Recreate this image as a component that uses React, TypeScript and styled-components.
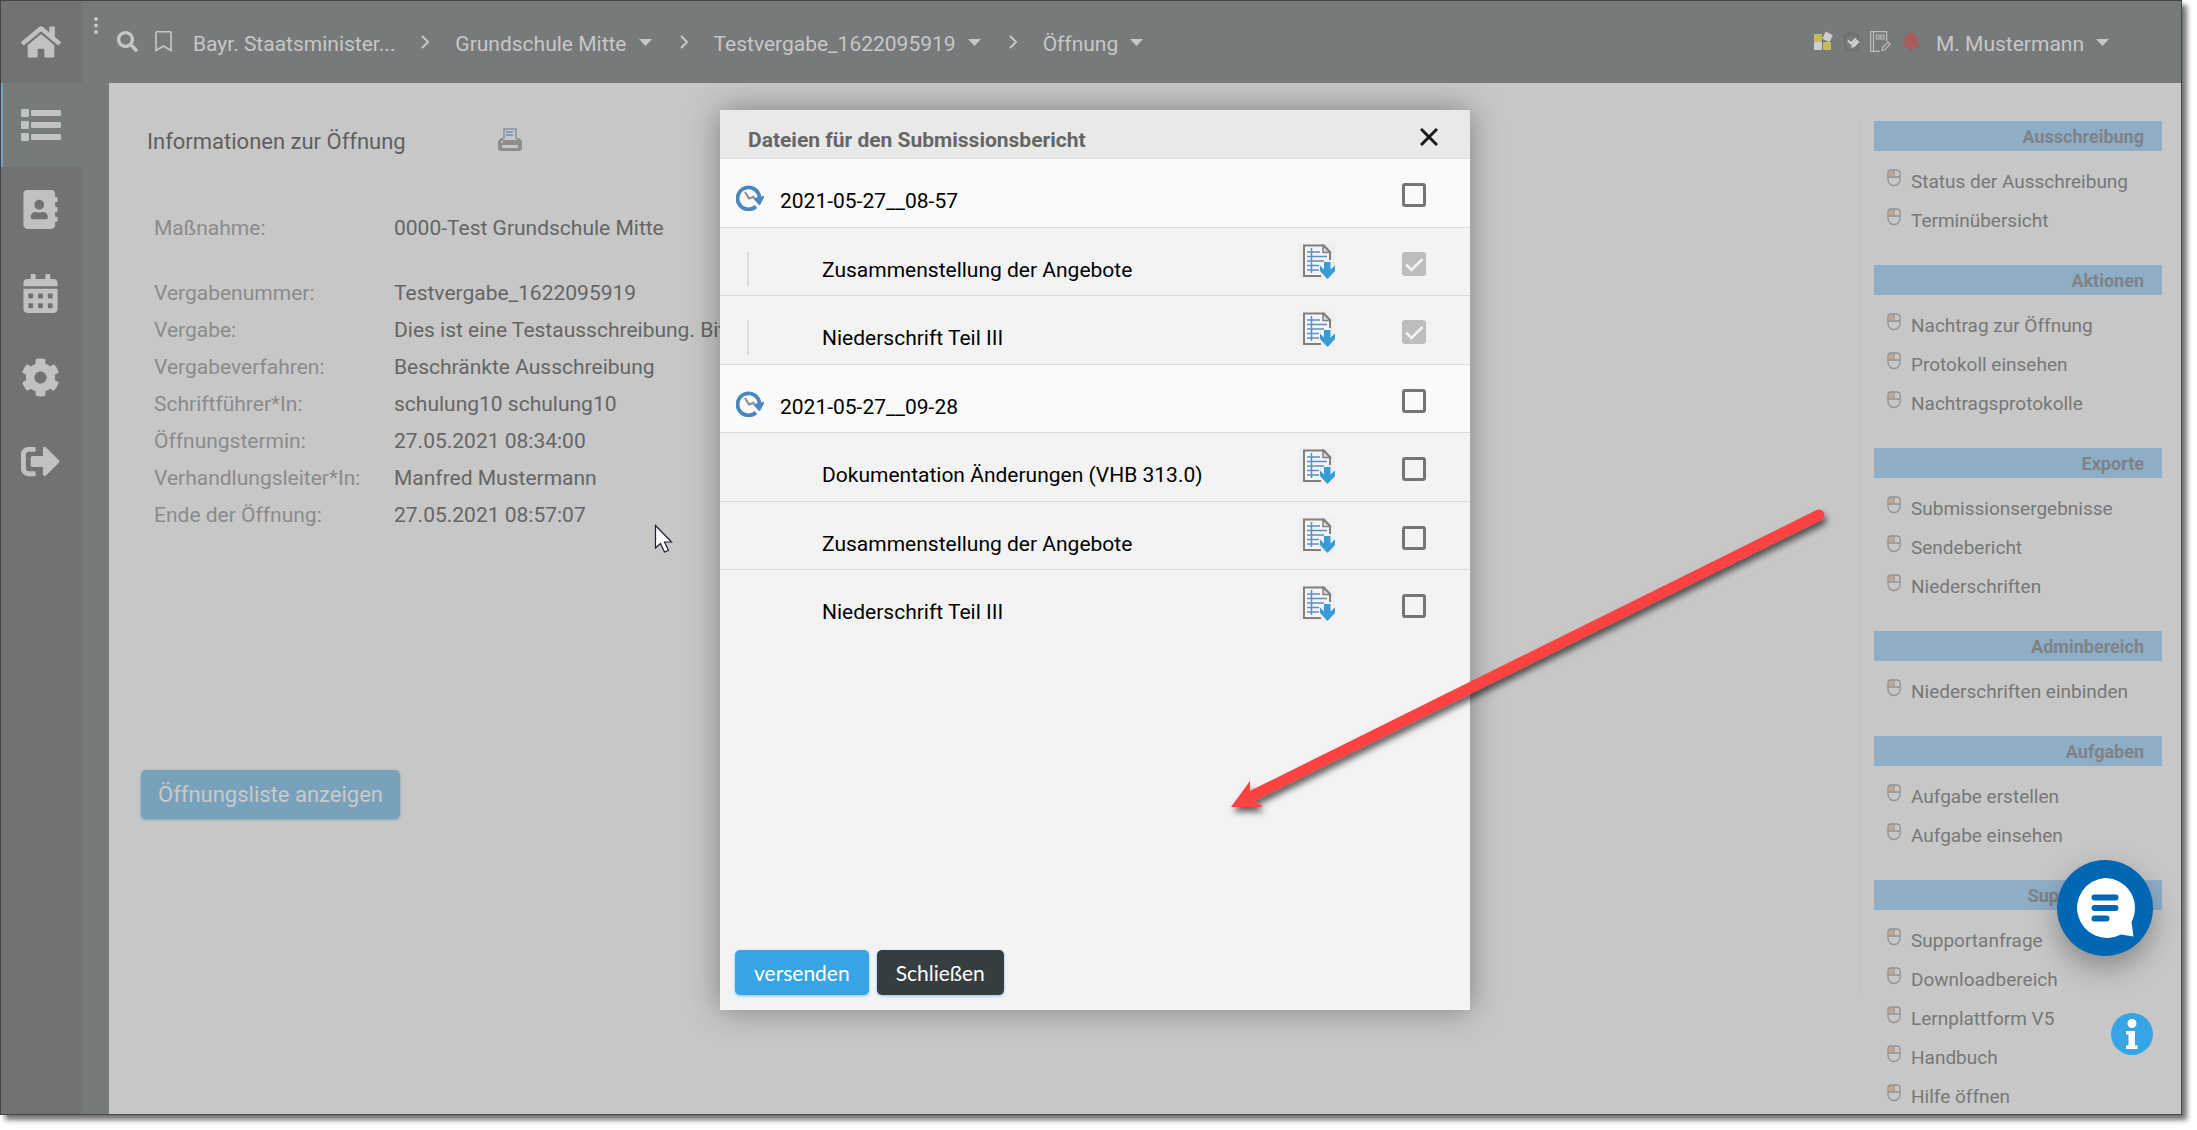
import React from "react";
import styled, { createGlobalStyle } from "styled-components";
import { FaAddressBook, FaBell, FaCalendarAlt, FaCog, FaHome, FaSearch, FaSignOutAlt } from "react-icons/fa";

const GlobalStyle = createGlobalStyle`
  *, *::before, *::after { box-sizing: border-box; }
  html, body { margin: 0; padding: 0; background: #fff; }
  body { font-family: Roboto, "Liberation Sans", sans-serif; font-size: 21px; line-height: 26px; }
  button { font: inherit; color: inherit; background: none; border: 0; padding: 0; margin: 0; cursor: pointer; }
  a { color: inherit; text-decoration: none; }
  h1, h2, h3, ul, dl, dd, dt, p { margin: 0; padding: 0; font-size: inherit; font-weight: inherit; }
  ul { list-style: none; }
  svg { display: block; flex: none; }
`;

const Page = styled.div`
  display: flex;
  height: 100vh;
  padding: 0 15px 15px 0;
  overflow: hidden;
`;

const Frame = styled.div`
  position: relative;
  flex: 1;
  min-width: 0;
  display: flex;
  border: 1px solid #444345;
  background: #767a7b;
  box-shadow: 5px 5px 5px rgba(0, 0, 0, 0.55);
`;

const Rail = styled.nav`
  flex: none;
  width: 81px;
  background: #717274;
  color: #c1c1c1;
`;

const RailLink = styled.a<{ $active?: boolean; $first?: boolean }>`
  display: flex;
  align-items: center;
  justify-content: center;
  height: ${(p) => (p.$first ? 82 : 84)}px;
  padding-right: 2px;
  background: ${(p) => (p.$active ? "#767a7b" : "transparent")};
  box-shadow: ${(p) => (p.$active ? "inset 2px 0 0 #73a3c3" : "none")};
`;

const Column = styled.div`
  flex: 1;
  min-width: 0;
  display: flex;
  flex-direction: column;
`;

const TopBar = styled.header`
  flex: none;
  display: flex;
  align-items: flex-start;
  height: 82px;
  padding: 16px 70px 0 9px;
  color: #c7c7c7;
`;

const Tools = styled.div`
  display: flex;
  align-items: flex-start;
  gap: 17px;
  padding: 14px 21px 0 16px;
`;

const Crumbs = styled.nav`
  display: flex;
  align-items: flex-start;
  padding-top: 14px;
`;

const Chevron = styled.svg`
  width: 8px;
  height: 22px;
  margin: 0 26px;
`;

const MenuButton = styled.button`
  display: flex;
  align-items: flex-start;
  gap: 12px;
  padding-right: 2px;
  white-space: nowrap;
`;

const UserTools = styled.div`
  display: flex;
  align-items: flex-start;
  gap: 10px;
  margin-left: auto;
  padding-top: 14px;
`;

const UserName = styled.div`
  padding-left: 5px;
`;

const Content = styled.div`
  flex: 1;
  min-height: 0;
  display: flex;
  margin-left: 27px;
  padding-right: 19px;
  background: #c7c7c7;
  overflow: hidden;
`;

const Main = styled.main`
  flex: 1;
  min-width: 0;
  padding: 44px 0 0 32px;
`;

const Heading = styled.div`
  display: flex;
  align-items: flex-start;
  gap: 92px;
  height: 30px;
  padding-left: 6px;
  font-size: 22px;
  line-height: 30px;
  color: #5f5f5f;
`;

const Facts = styled.dl`
  display: grid;
  grid-template-columns: 240px auto;
  margin-top: 53px;
  padding-left: 13px;
  line-height: 37px;
  white-space: nowrap;
`;

const FactName = styled.dt<{ $apart?: boolean }>`
  color: #8b8b8b;
  margin-bottom: ${(p) => (p.$apart ? 28 : 0)}px;
`;

const FactValue = styled.dd`
  color: #656565;
`;

const OpenList = styled.button`
  height: 49px;
  margin-top: 236px;
  padding: 0 17px;
  border-radius: 5px;
  background: #78a2bc;
  color: #c9c9c9;
  font-size: 22px;
  box-shadow: 0 1px 3px rgba(90, 140, 170, 0.6);
`;

const Divider = styled.div`
  flex: none;
  width: 1px;
  height: calc(100% - 158px);
  margin: 38px 13px 0 0;
  background: #bfbfbf;
`;

const Aside = styled.aside`
  flex: none;
  width: 288px;
  padding-top: 38px;
  color: #777;
`;

const AsideTitle = styled.h2`
  height: 30px;
  padding-right: 18px;
  background: #8eaec8;
  color: #808285;
  font-size: 18px;
  font-weight: 700;
  line-height: 32px;
  text-align: right;
`;

const AsideList = styled.ul`
  padding: 11px 0 25px 13px;
  font-size: 19px;
`;

const AsideLink = styled.a`
  display: flex;
  gap: 10px;
  height: 39px;
  line-height: 39px;
  white-space: nowrap;
  svg { margin-top: 7px; }
`;

const Backdrop = styled.div`
  position: absolute;
  inset: 82px 0 0 0;
  display: flex;
  justify-content: center;
  align-items: flex-start;
  padding: 27px 0 0 8px;
  overflow: hidden;
  pointer-events: none;
`;

const Dialog = styled.section`
  display: flex;
  flex-direction: column;
  width: 750px;
  height: 900px;
  background: #f3f3f3;
  color: #000;
  box-shadow: 0 0 30px rgba(0, 0, 0, 0.36);
  pointer-events: auto;
`;

const DialogHead = styled.div`
  display: flex;
  justify-content: space-between;
  align-items: flex-start;
  height: 49px;
  padding: 18px 32px 0 28px;
  border-bottom: 1px solid #dedede;
  background: #e9e9e9;
  color: #666;
  line-height: 24px;
`;

const DialogTitle = styled.h1`
  font-weight: 700;
`;

const Files = styled.ul`
  display: grid;
  grid-auto-rows: 1fr;
  height: 480px;
`;

const FileRow = styled.li<{ $group?: boolean; $last?: boolean }>`
  display: grid;
  grid-template-columns: ${(p) => (p.$group ? 44 : 86)}px 1fr 36px 91px;
  align-items: start;
  padding: 0 44px 0 16px;
  background: ${(p) => (p.$group ? "#fafafa" : "transparent")};
  border-bottom: ${(p) => (p.$last ? "0" : "1px solid #dcdcdc")};
`;

const ClockCell = styled.span`
  margin-top: 26px;
`;

const TreeCell = styled.span<{ $line?: boolean }>`
  height: 35px;
  margin: 24px 0 0 11px;
  border-left: ${(p) => (p.$line ? "2px solid #dcdcdc" : "0")};
`;

const FileName = styled.label`
  margin-top: 29px;
`;

const Download = styled.button`
  margin-top: 15px;
  background: #efefef;
`;

const CheckCell = styled.span`
  display: grid;
  justify-self: end;
  margin-top: 24px;
  > * { grid-area: 1 / 1; }
  svg { pointer-events: none; }
`;

const Check = styled.input`
  appearance: none;
  width: 24px;
  height: 24px;
  margin: 0;
  border: 3px solid #757575;
  border-radius: 3px;
  &:checked { border-color: #bdbdbd; background: #bdbdbd; }
`;

const DialogFoot = styled.div`
  display: flex;
  gap: 8px;
  margin-top: auto;
  padding: 15px;
`;

const Action = styled.button<{ $tone: string }>`
  height: 45px;
  padding: 0 19px;
  border-radius: 5px;
  background: ${(p) => p.$tone};
  color: #fff;
  font-family: Lato, "Open Sans", sans-serif;
  font-size: 21px;
  box-shadow: 0 1px 3px rgba(55, 164, 230, 0.6);
`;

const RoundButton = styled.button<{ $size: number; $bottom: number; $tone: string; $raised?: boolean }>`
  position: absolute;
  right: 28px;
  bottom: ${(p) => p.$bottom}px;
  width: ${(p) => p.$size}px;
  height: ${(p) => p.$size}px;
  display: grid;
  place-items: center;
  border-radius: 50%;
  background: ${(p) => p.$tone};
  box-shadow: ${(p) => (p.$raised ? "0 12px 28px rgba(0, 0, 0, 0.3)" : "none")};
`;

const ArrowMark = styled.svg`
  position: absolute;
  left: 1219px;
  top: 489px;
  pointer-events: none;
`;

const Pointer = styled.svg`
  position: absolute;
  left: 653px;
  top: 523px;
  pointer-events: none;
`;

const Caret = () => (
  <svg width="13" height="22" viewBox="0 0 13 22" aria-hidden="true">
    <path d="M0 8h13L6.500 15z" fill="currentColor" />
  </svg>
);

const CrumbSeparator = () => (
  <Chevron viewBox="0 0 8 22" fill="none" stroke="currentColor" strokeWidth="2" aria-hidden="true">
    <path d="M1 5l6 6-6 6" />
  </Chevron>
);

const ListIcon = () => (
  <svg width="40" height="32" viewBox="0 0 40 32" fill="currentColor" aria-hidden="true">
    {[0, 12, 24].map((y) => (
      <g key={y}>
        <rect x="0" y={y} width="8" height="8" rx="1" />
        <rect x="10" y={y + 1} width="30" height="6" rx="1" />
      </g>
    ))}
  </svg>
);

const MouseIcon = () => (
  <svg width="14" height="18" viewBox="0 0 14 18" aria-hidden="true">
    <rect x="2" y="2" width="4" height="5" fill="#cba283" />
    <path
      d="M4 1h6a3 3 0 0 1 3 3v6.500a6 6 0 0 1-12 0V4a3 3 0 0 1 3-3zM1 8h12M7 1v7"
      fill="none"
      stroke="#929292"
      strokeWidth="1.300"
    />
  </svg>
);

const ClockIcon = () => (
  <svg width="28" height="26" viewBox="0 0 28 26" fill="none" aria-hidden="true">
    <path d="M20 21.500A11 11 0 1 1 23.500 12" stroke="#4a86c0" strokeWidth="3.800" />
    <path d="M17.500 13.500L28 11.500 23.500 20z" fill="#4a86c0" stroke="#4a86c0" />
    <path d="M9 7l4 6.500 5.500-2" stroke="#8c8c8c" strokeWidth="2" />
  </svg>
);

const FileIcon = () => (
  <svg width="36" height="36" viewBox="0 0 36 36" fill="none" aria-hidden="true">
    <path d="M31 17V9l-6-6.500H5V33h17" fill="#f5f5f5" stroke="#808080" strokeWidth="2" />
    <path d="M24 2.500V9.500h7z" fill="#ddd" stroke="#808080" strokeWidth="1.500" />
    <path d="M8 9h13M8 13.500h20M8 18h17M8 22.500h12M8 27h12M12.500 5v25" stroke="#5c8fc6" strokeWidth="1.500" />
    <path d="M25 19h6.500v7.500l4.500-4V28l-7.500 8L21 28v-5.500l4 4z" fill="#3a9bd4" />
  </svg>
);

const PrinterIcon = () => (
  <svg width="24" height="24" viewBox="0 0 24 24" aria-hidden="true">
    <path d="M6 12V2h12v10" fill="#c7c7c7" stroke="#929292" strokeWidth="1.600" />
    <path d="M8 5h7M8 8h7" stroke="#7d9cba" strokeWidth="1.800" />
    <path d="M3 11h2v2h14v-2h2l3 3v7a3 3 0 0 1-3 3H3a3 3 0 0 1-3-3v-7z" fill="#8e8e8e" />
    <rect x="4" y="18" width="16" height="3" rx="1" fill="#c7c7c7" />
    <circle cx="4" cy="15" r="1" fill="#c7c7c7" />
  </svg>
);

const sections = [
  { title: "Ausschreibung", links: ["Status der Ausschreibung", "Terminübersicht"] },
  { title: "Aktionen", links: ["Nachtrag zur Öffnung", "Protokoll einsehen", "Nachtragsprotokolle"] },
  { title: "Exporte", links: ["Submissionsergebnisse", "Sendebericht", "Niederschriften"] },
  { title: "Adminbereich", links: ["Niederschriften einbinden"] },
  { title: "Aufgaben", links: ["Aufgabe erstellen", "Aufgabe einsehen"] },
  { title: "Supportcenter", links: ["Supportanfrage", "Downloadbereich", "Lernplattform V5", "Handbuch", "Hilfe öffnen"] },
];

const facts = [
  ["Maßnahme:", "0000-Test Grundschule Mitte"],
  ["Vergabenummer:", "Testvergabe_1622095919"],
  ["Vergabe:", "Dies ist eine Testausschreibung. Bitte"],
  ["Vergabeverfahren:", "Beschränkte Ausschreibung"],
  ["Schriftführer*In:", "schulung10 schulung10"],
  ["Öffnungstermin:", "27.05.2021 08:34:00"],
  ["Verhandlungsleiter*In:", "Manfred Mustermann"],
  ["Ende der Öffnung:", "27.05.2021 08:57:07"],
];

type FileEntry = { name: string; group?: boolean; locked?: boolean };

const files: FileEntry[] = [
  { name: "2021-05-27__08-57", group: true },
  { name: "Zusammenstellung der Angebote", locked: true },
  { name: "Niederschrift Teil III", locked: true },
  { name: "2021-05-27__09-28", group: true },
  { name: "Dokumentation Änderungen (VHB 313.0)" },
  { name: "Zusammenstellung der Angebote" },
  { name: "Niederschrift Teil III" },
];

const crumbs = ["Grundschule Mitte", "Testvergabe_1622095919", "Öffnung"];

function FileLine({ file, index }: { file: FileEntry; index: number }) {
  const id = `file-${index}`;
  return (
    <FileRow $group={file.group} $last={index === files.length - 1}>
      {file.group ? (
        <ClockCell>
          <ClockIcon />
        </ClockCell>
      ) : (
        <TreeCell $line={file.locked} />
      )}
      <FileName htmlFor={id}>{file.name}</FileName>
      {file.group ? (
        <span />
      ) : (
        <Download type="button" aria-label={`${file.name} herunterladen`}>
          <FileIcon />
        </Download>
      )}
      <CheckCell>
        <Check id={id} type="checkbox" defaultChecked={file.locked} disabled={file.locked} />
        {file.locked && (
          <svg width="24" height="24" viewBox="0 0 24 24" fill="none" aria-hidden="true">
            <path d="M4 12.500l5.500 5.500L20.500 7" stroke="#f3f3f3" strokeWidth="2.600" />
          </svg>
        )}
      </CheckCell>
    </FileRow>
  );
}

export default function App() {
  return (
    <Page>
      <GlobalStyle />
      <Frame>
        <Rail aria-label="Hauptmenü">
          <RailLink href="#" $first aria-label="Startseite"><FaHome size={40} /></RailLink>
          <RailLink href="#" $active aria-label="Liste"><ListIcon /></RailLink>
          <RailLink href="#" aria-label="Adressbuch"><FaAddressBook size={39} /></RailLink>
          <RailLink href="#" aria-label="Kalender"><FaCalendarAlt size={39} /></RailLink>
          <RailLink href="#" aria-label="Einstellungen"><FaCog size={39} /></RailLink>
          <RailLink href="#" aria-label="Abmelden"><FaSignOutAlt size={39} /></RailLink>
        </Rail>

        <Column>
          <TopBar>
            <svg width="10" height="18" viewBox="0 0 10 18" fill="currentColor" aria-hidden="true">
              <circle cx="5" cy="2" r="2" />
              <circle cx="5" cy="8.500" r="2" />
              <circle cx="5" cy="15" r="2" />
            </svg>
            <Tools>
              <button type="button" aria-label="Suchen"><FaSearch size={21} /></button>
              <button type="button" aria-label="Lesezeichen">
                <svg width="17" height="21" viewBox="0 0 17 21" fill="none" stroke="currentColor" strokeWidth="1.600">
                  <path d="M1 1.500a1 1 0 0 1 1-.7h13a1 1 0 0 1 1 .7V19.500l-7.500-4.500L1 19.500z" />
                </svg>
              </button>
            </Tools>
            <Crumbs aria-label="Pfad">
              <a href="#">Bayr. Staatsminister...</a>
              {crumbs.map((crumb) => (
                <React.Fragment key={crumb}>
                  <CrumbSeparator />
                  <MenuButton type="button">
                    {crumb}
                    <Caret />
                  </MenuButton>
                </React.Fragment>
              ))}
            </Crumbs>
            <UserTools>
              <svg width="20" height="21" viewBox="0 0 20 21" aria-hidden="true">
                <rect x="0" y="3" width="8" height="8" rx="1" fill="#c6b95e" />
                <rect x="0" y="11" width="8" height="8" rx="1" fill="#cfcfcf" />
                <rect x="9" y="11" width="8" height="8" rx="1" fill="#c6b95e" />
                <rect x="10" y="2" width="8" height="8" rx="1" fill="#cfcfcf" transform="rotate(28 14 5)" />
              </svg>
              <svg width="16" height="21" viewBox="0 0 16 21" aria-hidden="true">
                <path d="M1 4h13v15H1zM4 4V2h7v2" fill="none" stroke="#6b6f70" strokeWidth="1.600" />
                <path d="M4 9.500l3 3 5-5" fill="none" stroke="#d0d0d0" strokeWidth="2" />
                <path d="M7 17l1-4 5-4.500 2.500 2.500-5 5z" fill="#d0d0d0" />
              </svg>
              <svg width="21" height="21" viewBox="0 0 21 21" fill="none" stroke="#bdbdbd" strokeWidth="1.200" aria-hidden="true">
                <path d="M10 20.300H.7V.7h16V10M3.500.7v19.600M6.500 4h7.500v4H6.500z" />
                <path d="M8.500 6h3.500" strokeWidth="1.600" />
                <path d="M12 19.500l.8-3.500 5.200-5 2.200 2.200-5.200 5.300z" />
              </svg>
              <FaBell size={20} color="#a95c5c" />
              <UserName>
                <MenuButton type="button">
                  M. Mustermann
                  <Caret />
                </MenuButton>
              </UserName>
            </UserTools>
          </TopBar>

          <Content>
            <Main>
              <Heading>
                <h2>Informationen zur Öffnung</h2>
                <button type="button" aria-label="Drucken"><PrinterIcon /></button>
              </Heading>
              <Facts>
                {facts.map(([name, value], i) => (
                  <React.Fragment key={name}>
                    <FactName $apart={i === 0}>{name}</FactName>
                    <FactValue>{value}</FactValue>
                  </React.Fragment>
                ))}
              </Facts>
              <OpenList type="button">Öffnungsliste anzeigen</OpenList>
            </Main>
            <Divider />
            <Aside>
              {sections.map((section) => (
                <section key={section.title}>
                  <AsideTitle>{section.title}</AsideTitle>
                  <AsideList>
                    {section.links.map((link) => (
                      <li key={link}>
                        <AsideLink href="#">
                          <MouseIcon />
                          {link}
                        </AsideLink>
                      </li>
                    ))}
                  </AsideList>
                </section>
              ))}
            </Aside>
          </Content>
        </Column>

        <Backdrop>
          <Dialog role="dialog" aria-labelledby="dialog-title">
            <DialogHead>
              <DialogTitle id="dialog-title">Dateien für den Submissionsbericht</DialogTitle>
              <button type="button" aria-label="Fenster schließen">
                <svg width="18" height="18" viewBox="0 0 18 18" stroke="#1a1a1a" strokeWidth="3" aria-hidden="true">
                  <path d="M1 1l16 16M17 1L1 17" />
                </svg>
              </button>
            </DialogHead>
            <Files>
              {files.map((file, i) => (
                <FileLine key={i} file={file} index={i} />
              ))}
            </Files>
            <DialogFoot>
              <Action type="button" $tone="#37a4e6">versenden</Action>
              <Action type="button" $tone="#363d40">Schließen</Action>
            </DialogFoot>
          </Dialog>
        </Backdrop>

        <RoundButton type="button" aria-label="Chat öffnen" $size={96} $bottom={158} $tone="#0067b3" $raised>
          <svg width="60" height="60" viewBox="0 0 60 60" aria-hidden="true">
            <path d="M30 0a30 30 0 0 1 26.500 44L58.500 58.500 46 56.500A30 30 0 1 1 30 0z" fill="#fff" />
            <path d="M19.500 19.500h21M19.500 30h21M19.500 40.500h12" stroke="#0067b3" strokeWidth="6" strokeLinecap="round" />
          </svg>
        </RoundButton>
        <RoundButton type="button" aria-label="Information" $size={42} $bottom={59} $tone="#37a4e6">
          <svg width="14" height="30" viewBox="0 0 14 30" fill="#fff" aria-hidden="true">
            <circle cx="7" cy="4.500" r="4.500" />
            <path d="M1 12h9v14.500h2.500V30H1v-3.500h2.500v-11H1z" />
          </svg>
        </RoundButton>

        <Pointer width="22" height="32" viewBox="0 0 22 32" aria-hidden="true">
          <path d="M1.500 1.500v22.500l5-4.500 4 8.500 4-1.500-4-8.500h7z" fill="#fff" stroke="#1d1d2b" strokeWidth="1.200" />
        </Pointer>
        <ArrowMark width="620" height="340" viewBox="1220 490 620 340" aria-hidden="true">
          <defs>
            <filter id="arrow-shadow" x="-5%" y="-5%" width="110%" height="115%">
              <feDropShadow dx="2" dy="5" stdDeviation="3" floodColor="#000" floodOpacity="0.6" />
            </filter>
          </defs>
          <g filter="url(#arrow-shadow)" fill="#fd4343">
            <path d="M1252 796L1819 515" stroke="#fd4343" strokeWidth="11" strokeLinecap="round" />
            <path d="M1231 807L1250 781 1250 791 1255 801 1263 807z" />
          </g>
        </ArrowMark>
      </Frame>
    </Page>
  );
}
